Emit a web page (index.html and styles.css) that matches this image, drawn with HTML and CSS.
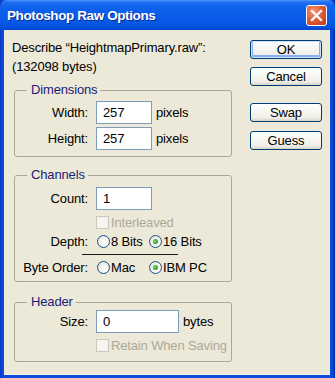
FILE: index.html
```html
<!DOCTYPE html>
<html>
<head>
<meta charset="utf-8">
<link rel="stylesheet" href="styles.css">
</head>
<body>
<div class="window">
  <div class="titlebar">
    <span class="title">Photoshop Raw Options</span>
    <span class="close"><svg width="19" height="19" viewBox="0 0 19 19"><path d="M5 5 L14 14 M14 5 L5 14" stroke="#fff" stroke-width="2.2" stroke-linecap="square"/></svg></span>
  </div>
  <div class="client">
    <div class="main">
      <p class="desc">Describe “HeightmapPrimary.raw”:<br>(132098 bytes)</p>

      <fieldset class="group dims">
        <legend>Dimensions</legend>
        <div class="row"><span class="lbl">Width:</span><span class="tb w56">257</span><span class="unit">pixels</span></div>
        <div class="row gap3"><span class="lbl">Height:</span><span class="tb w56">257</span><span class="unit">pixels</span></div>
      </fieldset>

      <fieldset class="group chans">
        <legend>Channels</legend>
        <div class="row"><span class="lbl">Count:</span><span class="tb w56">1</span></div>
        <div class="row r15 mt5"><span class="lbl"></span><span class="check"></span><span class="dis">Interleaved</span></div>
        <div class="row r15 mt4"><span class="lbl">Depth:</span>
          <span class="opt first"><span class="radio"></span>8 Bits</span>
          <span class="opt"><span class="radio on"></span>16 Bits</span>
        </div>
        <div class="sep"></div>
        <div class="row r15 mt5"><span class="lbl">Byte Order:</span>
          <span class="opt first"><span class="radio"></span>Mac</span>
          <span class="opt"><span class="radio on"></span>IBM PC</span>
        </div>
      </fieldset>

      <fieldset class="group head">
        <legend>Header</legend>
        <div class="row"><span class="lbl">Size:</span><span class="tb w83">0</span><span class="unit">bytes</span></div>
        <div class="row r15 mt5"><span class="lbl"></span><span class="check"></span><span class="dis">Retain When Saving</span></div>
      </fieldset>
    </div>
    <div class="buttons">
      <button class="btn ok">OK</button>
      <button class="btn cancel">Cancel</button>
      <button class="btn swap">Swap</button>
      <button class="btn guess">Guess</button>
    </div>
  </div>
</div>
</body>
</html>
```

FILE: styles.css
```css
* { box-sizing: border-box; }
html, body { margin: 0; padding: 0; }
body {
  width: 335px;
  height: 378px;
  overflow: hidden;
  font-family: "Liberation Sans", Arial, sans-serif;
  font-size: 13px;
  letter-spacing: -0.15px;
  color: #000;
  background: #0A3CCB;
}
.window {
  width: 335px;
  height: 378px;
  display: flex;
  flex-direction: column;
  background: linear-gradient(90deg, #0831C4 0, #0B4CDA 2px, #0B4CDA 331px, #0A3FD0 333px, #06249A 335px);
}
.titlebar {
  height: 30px;
  flex: none;
  display: flex;
  align-items: center;
  justify-content: space-between;
  padding: 1px 8px 0 7px;
  background: linear-gradient(#4A96FA 0, #2370F2 2px, #1063EC 6px, #0B5DE9 45%, #0858E6 75%, #0553DE 90%, #0442CA 100%);
  border-radius: 7px 7px 0 0;
}
.title {
  color: #fff;
  font-weight: bold;
  font-size: 13.5px;
  letter-spacing: -0.4px;
  text-shadow: 1px 1px 0 #0B2D95;
}
.close {
  width: 21px;
  height: 21px;
  border: 1px solid #fff;
  border-radius: 3px;
  background: radial-gradient(circle at 35% 30%, #F09A7C 0, #E0603C 45%, #CC4422 80%, #B83618 100%);
  display: flex;
  align-items: center;
  justify-content: center;
}
.client {
  flex: 1;
  display: flex;
  background: #ECE9D8;
  margin: 0 5px 3px 4px;
  border-bottom: 1px solid #F4F3EE;
}
.main {
  width: 228px;
  flex: none;
  padding: 8px 0 0 10px;
}
.desc {
  margin: 0 0 6px -2px;
  line-height: 19px;
}
.group {
  margin: 0;
  border: 1px solid #A9A898;
  border-radius: 3px;
  width: 218px;
  min-width: 0;
}
.group legend {
  margin-left: 12px;
  padding: 0 3px 0 4px;
  color: #1B1B78;
  line-height: 16px;
}
.dims { padding: 3px 0 6px 0; }
.chans { margin-top: 10px; padding: 4px 0 6px 0; }
.head { margin-top: 12px; padding: 0 0 8px 0; }
.row {
  display: flex;
  align-items: center;
  height: 23px;
}
.row.r15 { height: 15px; }
.gap3 { margin-top: 3px; }
.mt5 { margin-top: 5px; }
.mt4 { margin-top: 4px; }
.lbl {
  width: 73px;
  flex: none;
  text-align: right;
  margin-right: 8px;
  white-space: nowrap;
}
.tb {
  height: 23px;
  border: 1px solid #7F9DB9;
  background: #fff;
  padding-left: 6px;
  line-height: 21px;
}
.w56 { width: 56px; }
.w83 { width: 83px; }
.unit { margin-left: 4px; }
.check {
  width: 13px;
  height: 13px;
  border: 1px solid #CAC8BB;
  background: #F5F4EE;
  margin-right: 2px;
}
.dis { color: #ACA899; }
.opt {
  display: flex;
  align-items: center;
  white-space: nowrap;
}
.opt.first { width: 52px; }
.radio {
  width: 13px;
  height: 13px;
  border-radius: 50%;
  border: 1px solid #1C5180;
  background: radial-gradient(circle at 65% 65%, #fff 0, #F2F1EB 50%, #DCD9CC 100%);
  margin: 0 1px 0 1px;
  display: flex;
  align-items: center;
  justify-content: center;
}
.radio.on::after {
  content: "";
  width: 5px;
  height: 5px;
  border-radius: 50%;
  background: radial-gradient(circle at 40% 40%, #6DDB6D 0, #21A121 70%);
}
.sep {
  margin: 5px 0 0 67px;
  width: 96px;
  height: 1px;
  background: #1A1A1A;
}
.buttons {
  display: flex;
  flex-direction: column;
  padding: 10px 0 0 18px;
}
.btn {
  width: 72px;
  height: 19px;
  padding: 0;
  font-family: "Liberation Sans", Arial, sans-serif;
  font-size: 13px;
  letter-spacing: -0.15px;
  color: #000;
  border: 1px solid #003C74;
  border-radius: 3px;
  background: linear-gradient(#FFFFFF 0, #F7F7F4 40%, #EFEEE8 80%, #D8D4C8 100%);
  line-height: 17px;
}
.btn.ok {
  box-shadow: inset 0 0 0 1px #CEE2FC, inset 0 -1px 0 2px #8BB0EE;
}
.btn.cancel { margin-top: 8px; }
.btn.swap { margin-top: 17px; }
.btn.guess { margin-top: 9px; }
```
